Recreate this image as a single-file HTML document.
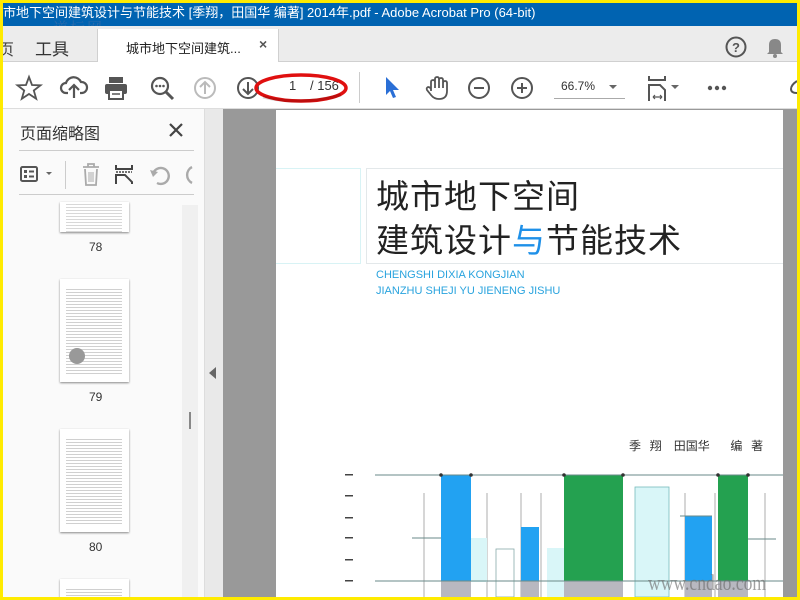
<!DOCTYPE html>
<html><head><meta charset="utf-8"><style>
*{margin:0;padding:0;box-sizing:border-box}
body{width:800px;height:600px;overflow:hidden;background:#ffeb00;font-family:"Liberation Sans","Noto Sans CJK SC",sans-serif;position:relative}
.a{position:absolute}
svg{position:absolute;overflow:visible}
</style></head><body>
<div class="a" style="left:3px;top:3px;width:794px;height:594px;background:#fff;overflow:hidden">
 <div class="a" style="left:0;top:0;width:794px;height:23px;background:#0063b1;color:#fff;font-size:13px;line-height:19px;white-space:nowrap;font-family:'Liberation Sans','Noto Sans CJK SC',sans-serif">市地下空间建筑设计与节能技术 [季翔，田国华 编著] 2014年.pdf - Adobe Acrobat Pro (64-bit)</div>
 <div class="a" style="left:50px;top:14px;color:rgba(120,120,160,.35);font-size:15px;font-family:'Noto Serif CJK SC',serif;letter-spacing:2px">道标网</div>
 <div class="a" style="left:0;top:23px;width:794px;height:36px;background:#ececec;border-bottom:1px solid #d0d0d0"></div>
 <div class="a" style="left:-5px;top:33px;font-size:16px;color:#444">页</div>
 <div class="a" style="left:32px;top:32px;font-size:17px;color:#333">工具</div>
 <div class="a" style="left:94px;top:26px;width:182px;height:34px;background:#fff;border-left:1px solid #d0d0d0;border-right:1px solid #d0d0d0"></div>
 <div class="a" style="left:123px;top:35px;font-size:13px;color:#222">城市地下空间建筑...</div>
 <div class="a" style="left:256px;top:33px;font-size:14px;color:#555;font-weight:bold">×</div>
 <svg style="left:722px;top:33px" width="22" height="22"><circle cx="11" cy="11" r="9.5" fill="none" stroke="#555" stroke-width="2"/><text x="11" y="16" text-anchor="middle" font-size="13" font-weight="bold" fill="#555" font-family="Liberation Sans">?</text></svg>
 <svg style="left:763px;top:33px" width="18" height="22"><path d="M3 16 L3 9 Q3 3 9 3 Q15 3 15 9 L15 16 L17 18 L1 18 Z" fill="#888"/><circle cx="9" cy="20" r="2" fill="#888"/></svg>
 <div class="a" style="left:0;top:59px;width:794px;height:47px;background:#fff;border-bottom:1px solid #ddd"></div>
 <svg style="left:13px;top:72px" width="26" height="26"><path d="M13 2 L16 10 L24.5 10.3 L17.8 15.5 L20.2 23.8 L13 19 L5.8 23.8 L8.2 15.5 L1.5 10.3 L10 10 Z" fill="none" stroke="#555" stroke-width="1.8"/></svg>
 <svg style="left:57px;top:73px" width="28" height="24"><path d="M8 17 H6 A5 5 0 0 1 6 7 A8 8 0 0 1 21 6 A5.5 5.5 0 0 1 22 17 H20" fill="none" stroke="#555" stroke-width="2.2"/><path d="M14 22 V10 M9 14 L14 9 L19 14" fill="none" stroke="#555" stroke-width="2.2"/></svg>
 <svg style="left:101px;top:73px" width="24" height="24"><rect x="5" y="1" width="14" height="6" fill="#555"/><rect x="1" y="8" width="22" height="10" rx="2" fill="#555"/><rect x="5" y="14" width="14" height="9" fill="#fff" stroke="#555" stroke-width="2"/><line x1="8" y1="18" x2="16" y2="18" stroke="#555" stroke-width="1.5"/></svg>
 <svg style="left:147px;top:73px" width="26" height="26"><circle cx="10" cy="10" r="8" fill="none" stroke="#555" stroke-width="2.2"/><path d="M16 16 L23 23" stroke="#555" stroke-width="3"/><circle cx="6.5" cy="10" r="1.3" fill="#555"/><circle cx="10" cy="10" r="1.3" fill="#555"/><circle cx="13.5" cy="10" r="1.3" fill="#555"/></svg>
 <svg style="left:191px;top:73px" width="24" height="24"><circle cx="11" cy="12" r="10" fill="none" stroke="#bbb" stroke-width="2"/><path d="M11 18 V6 M6 11 L11 6 L16 11" fill="none" stroke="#bbb" stroke-width="2"/></svg>
 <svg style="left:234px;top:73px" width="24" height="24"><circle cx="11" cy="12" r="10" fill="none" stroke="#555" stroke-width="2"/><path d="M11 6 V18 M6 13 L11 18 L16 13" fill="none" stroke="#555" stroke-width="2"/></svg>
 <div class="a" style="left:286px;top:75px;font-size:13px;color:#333">1</div>
 <div class="a" style="left:307px;top:75px;font-size:13px;color:#333">/ 156</div>
 <svg style="left:250px;top:68px" width="100" height="36"><ellipse cx="48" cy="17" rx="45" ry="13" fill="none" stroke="#e01010" stroke-width="3.5"/><path d="M10 26 Q48 35 88 24" fill="none" stroke="rgba(0,0,0,.15)" stroke-width="3"/></svg>
 <div class="a" style="left:356px;top:69px;width:1px;height:31px;background:#ccc"></div>
 <svg style="left:381px;top:73px" width="18" height="24"><path d="M2 1 L2 19 L6 15 L9 22 L12 21 L9 14 L15 14 Z" fill="#2a6fd6"/></svg>
 <svg style="left:421px;top:72px" width="26" height="26"><path d="M7 16 V7 Q7 5 9 5 Q11 5 11 7 V13 V4 Q11 2 13 2 Q15 2 15 4 V13 V5 Q15 3 17 3 Q19 3 19 5 V13 V8 Q19 6 21 6 Q23 6 23 8 V16 Q23 24 15 24 Q10 24 7 20 L3 15 Q2 13 4 12 Q6 12 7 14" fill="none" stroke="#555" stroke-width="1.8"/></svg>
 <svg style="left:465px;top:73px" width="24" height="24"><circle cx="11" cy="12" r="10" fill="none" stroke="#555" stroke-width="2"/><path d="M6 12 H16" stroke="#555" stroke-width="2"/></svg>
 <svg style="left:508px;top:73px" width="24" height="24"><circle cx="11" cy="12" r="10" fill="none" stroke="#555" stroke-width="2"/><path d="M6 12 H16 M11 7 V17" stroke="#555" stroke-width="2"/></svg>
 <div class="a" style="left:558px;top:76px;font-size:12px;color:#333">66.7%</div>
 <div class="a" style="left:551px;top:95px;width:71px;height:1px;background:#aaa"></div>
 <svg style="left:606px;top:82px" width="8" height="5"><path d="M0 0 H8 L4 4 Z" fill="#666"/></svg>
 <svg style="left:645px;top:72px" width="20" height="28"><path d="M1 1 V5 H17 V1" fill="none" stroke="#555" stroke-width="2"/><path d="M1 26 V10 H12 L17 15 V26" fill="none" stroke="#555" stroke-width="2"/><path d="M5 22 H14 M5 22 L7 20 M5 22 L7 24 M14 22 L12 20 M14 22 L12 24" stroke="#555" stroke-width="1.2" fill="none"/></svg>
 <svg style="left:668px;top:82px" width="8" height="5"><path d="M0 0 H8 L4 4 Z" fill="#666"/></svg>
 <svg style="left:704px;top:82px" width="20" height="6"><circle cx="3" cy="3" r="2.2" fill="#555"/><circle cx="10" cy="3" r="2.2" fill="#555"/><circle cx="17" cy="3" r="2.2" fill="#555"/></svg>
 <svg style="left:786px;top:76px" width="10" height="16"><path d="M8 2 Q2 6 2 10 Q2 14 8 14" fill="none" stroke="#555" stroke-width="2"/></svg>
 <div class="a" style="left:0;top:106px;width:202px;height:488px;background:#fafafa;border-right:1px solid #ddd"></div>
 <div class="a" style="left:17px;top:117px;font-size:16px;color:#333">页面缩略图</div>
 <svg style="left:166px;top:120px" width="14" height="14"><path d="M1 1 L13 13 M13 1 L1 13" stroke="#444" stroke-width="2.2"/></svg>
 <div class="a" style="left:16px;top:147px;width:175px;height:1px;background:#ccc"></div>
 <svg style="left:17px;top:162px" width="40" height="20"><rect x="1" y="2" width="16" height="14" rx="1.5" fill="none" stroke="#555" stroke-width="2"/><rect x="4" y="5" width="3" height="3" fill="#555"/><rect x="4" y="10" width="3" height="3" fill="#555"/><path d="M9 6.5 H14 M9 11.5 H14" stroke="#555" stroke-width="2"/><path d="M26 7 H32 L29 10 Z" fill="#666"/></svg>
 <div class="a" style="left:62px;top:158px;width:1px;height:28px;background:#ccc"></div>
 <svg style="left:78px;top:160px" width="20" height="24"><path d="M2 4 H18 M7 4 V1 H13 V4 M4 6 L5 22 H15 L16 6" fill="none" stroke="#aaa" stroke-width="1.8"/><path d="M8 9 V19 M10 9 V19 M12 9 V19" stroke="#aaa" stroke-width="1"/></svg>
 <svg style="left:112px;top:161px" width="20" height="22"><path d="M1 1 V5 H17 V1" fill="none" stroke="#444" stroke-width="2"/><path d="M1 8 H17" stroke="#444" stroke-width="1.5" stroke-dasharray="2 1"/><path d="M1 20 V11 H10 L17 18 V20" fill="none" stroke="#444" stroke-width="2"/></svg>
 <svg style="left:146px;top:162px" width="22" height="22"><path d="M4 9 A8 8 0 1 1 8 18" fill="none" stroke="#aaa" stroke-width="2.4"/><path d="M1 5 L4 12 L9 7 Z" fill="#aaa"/></svg>
 <svg style="left:181px;top:162px" width="10" height="22"><path d="M8 2 A9 9 0 0 0 8 18" fill="none" stroke="#aaa" stroke-width="2.4"/></svg>
 <div class="a" style="left:16px;top:191px;width:175px;height:1px;background:#ccc"></div>
 <div class="a" style="left:179px;top:202px;width:16px;height:392px;background:#f0f0f0"></div>
 <div class="a" style="left:186px;top:409px;width:2px;height:17px;background:#888"></div>
 <div class="a" style="left:57px;top:199px;width:69px;height:30px;background:#fff;box-shadow:0 1px 2px #888;background-image:repeating-linear-gradient(#fff 0 2px,#d8d8d8 2px 3px);background-size:56px 100%;background-repeat:no-repeat;background-position:6px 0"></div>
 <div class="a" style="left:86px;top:237px;font-size:12px;color:#333">78</div>
 <div class="a" style="left:57px;top:276px;width:69px;height:103px;background:#fff;box-shadow:0 1px 2px #888;background-image:repeating-linear-gradient(#fff 0 2px,#d0d0d0 2px 3px);background-size:56px 88px;background-repeat:no-repeat;background-position:6px 8px"></div>
 <div class="a" style="left:66px;top:345px;width:16px;height:16px;border-radius:50%;background:#999"></div>
 <div class="a" style="left:86px;top:387px;font-size:12px;color:#333">79</div>
 <div class="a" style="left:57px;top:426px;width:69px;height:103px;background:#fff;box-shadow:0 1px 2px #888;background-image:repeating-linear-gradient(#fff 0 2px,#d0d0d0 2px 3px);background-size:56px 88px;background-repeat:no-repeat;background-position:6px 8px"></div>
 <div class="a" style="left:86px;top:537px;font-size:12px;color:#333">80</div>
 <div class="a" style="left:57px;top:576px;width:69px;height:30px;background:#fff;box-shadow:0 1px 2px #888;background-image:repeating-linear-gradient(#fff 0 2px,#d0d0d0 2px 3px);background-size:56px 100%;background-repeat:no-repeat;background-position:6px 8px"></div>
 <div class="a" style="left:202px;top:106px;width:18px;height:488px;background:#e9e9e9"></div>
 <svg style="left:206px;top:364px" width="8" height="12"><path d="M7 0 V12 L0 6 Z" fill="#666"/></svg>
 <div class="a" style="left:220px;top:106px;width:574px;height:488px;background:#999"></div>
 <div class="a" style="left:273px;top:107px;width:507px;height:487px;background:#fff;overflow:hidden">
  <div class="a" style="left:0;top:58px;width:85px;height:96px;border:1px solid #d8f3f5;border-left:none"></div>
  <div class="a" style="left:90px;top:58px;width:420px;height:96px;border:1px solid #e3e8ea;border-right:none"></div>
  <div class="a" style="left:100px;top:62px;font-size:33px;color:#222;line-height:44px;letter-spacing:1px;font-family:'Noto Sans CJK SC',sans-serif">城市地下空间<br>建筑设计<span style="color:#1e90e8">与</span>节能技术</div>
  <div class="a" style="left:100px;top:157px;font-size:11px;color:#29a3de;line-height:16px">CHENGSHI DIXIA KONGJIAN<br>JIANZHU SHEJI YU JIENENG JISHU</div>
  <div class="a" style="left:353px;top:327px;font-size:12px;color:#333;word-spacing:6px;font-family:'Noto Sans CJK SC',sans-serif">季 翔　田国华　 编 著</div>
  <svg style="left:0;top:0" width="507" height="487">
   <g fill="#444"><rect x="69" y="364" width="8" height="1.5"/><rect x="69" y="385" width="8" height="1.5"/><rect x="69" y="407" width="8" height="1.5"/><rect x="69" y="427" width="8" height="1.5"/><rect x="69" y="449" width="8" height="1.5"/><rect x="69" y="470" width="8" height="1.5"/></g>
   <g stroke="#999" stroke-width="0.8"><line x1="148" y1="383" x2="148" y2="487"/><line x1="211" y1="383" x2="211" y2="487"/><line x1="245" y1="383" x2="245" y2="487"/><line x1="265" y1="383" x2="265" y2="487"/><line x1="409" y1="383" x2="409" y2="487"/><line x1="439" y1="383" x2="439" y2="487"/><line x1="489" y1="383" x2="489" y2="487"/></g>
   <rect x="195" y="428" width="16" height="44" fill="#d9f6f8"/>
   <rect x="271" y="438" width="17" height="49" fill="#d9f6f8"/>
   <rect x="359" y="377" width="34" height="110" fill="#d9f6f8" stroke="#7bb" stroke-width="0.8"/>
   <rect x="220" y="439" width="18" height="48" fill="#fff" stroke="#8aa" stroke-width="0.8"/>
   <rect x="165" y="365" width="30" height="106" fill="#22a2f2"/>
   <rect x="245" y="417" width="18" height="54" fill="#22a2f2"/>
   <rect x="409" y="406" width="27" height="65" fill="#22a2f2"/>
   <rect x="288" y="365" width="59" height="106" fill="#24a150"/>
   <rect x="442" y="365" width="30" height="106" fill="#24a150"/>
   <g fill="#b8b8c0"><rect x="165" y="471" width="30" height="16"/><rect x="245" y="471" width="18" height="16"/><rect x="288" y="471" width="59" height="16"/><rect x="409" y="471" width="27" height="16"/><rect x="442" y="471" width="30" height="16"/></g>
   <g stroke="#6a8a88" stroke-width="0.9"><line x1="99" y1="365" x2="507" y2="365"/><line x1="99" y1="471" x2="507" y2="471"/><line x1="136" y1="428" x2="165" y2="428"/><line x1="472" y1="429" x2="500" y2="429"/><line x1="404" y1="406" x2="436" y2="406"/></g>
   <g fill="#333"><circle cx="165" cy="365" r="1.8"/><circle cx="195" cy="365" r="1.8"/><circle cx="288" cy="365" r="1.8"/><circle cx="347" cy="365" r="1.8"/><circle cx="442" cy="365" r="1.8"/><circle cx="472" cy="365" r="1.8"/></g>
  </svg>
  <div class="a" style="left:372px;top:460px;font-size:22px;color:rgba(110,110,110,.65);font-family:'Liberation Serif',serif;transform:scaleX(.8);transform-origin:left">www.cndao.com</div>
 </div>
</div>
</body></html>
